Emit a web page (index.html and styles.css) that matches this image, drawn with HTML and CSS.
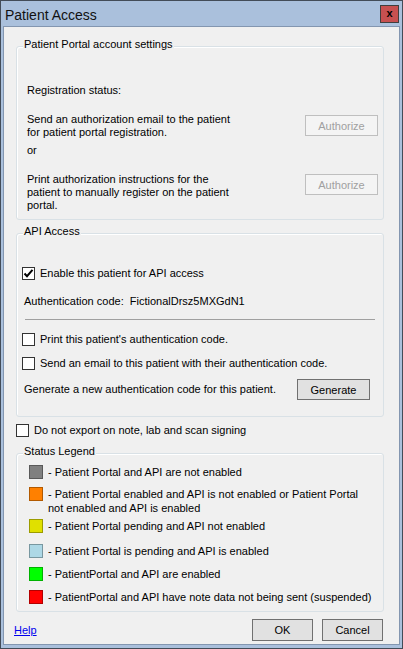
FILE: index.html
```html
<!DOCTYPE html>
<html lang="en">
<head>
  <meta charset="UTF-8">
  <meta name="viewport" content="width=device-width, initial-scale=1">
  <title>Patient Access</title>
  <link rel="stylesheet" href="styles.css">
</head>
<body>

  <div class="window">
    <div class="titlebar">
      <span class="title">Patient Access</span>
      <span class="close">x</span>
    </div>

    <div class="client">

      <div class="group group-portal">
        <span class="group-title">Patient Portal account settings</span>
        <div class="reg-status">Registration status:</div>

        <div class="auth-row auth-row-first">
          <div class="auth-text">Send an authorization email to the patient<br>for patient portal registration.</div>
          <button class="btn btn-disabled" disabled>Authorize</button>
        </div>

        <div class="or">or</div>

        <div class="auth-row auth-row-second">
          <div class="auth-text">Print authorization instructions for the<br>patient to manually register on the patient<br>portal.</div>
          <button class="btn btn-disabled" disabled>Authorize</button>
        </div>
      </div>

      <div class="group group-api">
        <span class="group-title">API Access</span>

        <label class="check-row check-enable">
          <span class="check checked">
            <svg width="11" height="11" viewBox="0 0 11 11"><path d="M1.5 5.5 L4 8.2 L9.5 1.8" fill="none" stroke="#000" stroke-width="2"/></svg>
          </span>
          <span>Enable this patient for API access</span>
        </label>

        <div class="auth-code">Authentication code:&nbsp; FictionalDrsz5MXGdN1</div>

        <div class="separator"></div>

        <label class="check-row check-print">
          <span class="check"></span>
          <span>Print this patient's authentication code.</span>
        </label>

        <label class="check-row check-email">
          <span class="check"></span>
          <span>Send an email to this patient with their authentication code.</span>
        </label>

        <div class="generate-row">
          <span class="generate-text">Generate a new authentication code for this patient.</span>
          <button class="btn btn-generate">Generate</button>
        </div>
      </div>

      <label class="check-row check-export">
        <span class="check"></span>
        <span>Do not export on note, lab and scan signing</span>
      </label>

      <div class="group group-legend">
        <span class="group-title">Status Legend</span>

        <div class="legend-row legend-1">
          <span class="swatch swatch-grey"></span>
          <span>- Patient Portal and API are not enabled</span>
        </div>
        <div class="legend-row legend-2 legend-tall">
          <span class="swatch swatch-orange"></span>
          <span>- Patient Portal enabled and API is not enabled or Patient Portal<br>not enabled and API is enabled</span>
        </div>
        <div class="legend-row legend-3">
          <span class="swatch swatch-yellow"></span>
          <span>- Patient Portal pending and API not enabled</span>
        </div>
        <div class="legend-row legend-4">
          <span class="swatch swatch-blue"></span>
          <span>- Patient Portal is pending and API is enabled</span>
        </div>
        <div class="legend-row legend-5">
          <span class="swatch swatch-green"></span>
          <span>- PatientPortal and API are enabled</span>
        </div>
        <div class="legend-row legend-6">
          <span class="swatch swatch-red"></span>
          <span>- PatientPortal and API have note data not being sent (suspended)</span>
        </div>
      </div>

      <div class="footer">
        <a href="#" class="help">Help</a>
        <div class="footer-buttons">
          <button class="btn btn-ok">OK</button>
          <button class="btn btn-cancel">Cancel</button>
        </div>
      </div>

    </div>
  </div>

</body>
</html>
```

FILE: styles.css
```css
* {
  box-sizing: border-box;
}

body {
  margin: 0;
  padding: 0;
  font-family: 'Liberation Sans', Arial, sans-serif;
  font-size: 11px;
  line-height: 13px;
  color: #000;
  background-color: #f0f0f0;
}

.window {
  width: 403px;
  height: 649px;
  border: 1px solid #434c58;
  background-color: #aac0dc;
  padding: 0 2px 3px 2px;
  display: flex;
  flex-direction: column;
}

.titlebar {
  height: 25px;
  display: flex;
  justify-content: space-between;
  align-items: flex-start;
}

.title {
  font-size: 14px;
  line-height: 18px;
  margin-top: 5px;
  margin-left: 2px;
  color: #111;
}

.close {
  width: 19px;
  height: 18px;
  margin-top: 4px;
  margin-right: 1px;
  background-color: #c75050;
  border: 1px solid #3f3f3f;
  font-weight: bold;
  font-size: 11px;
  line-height: 14px;
  text-align: center;
  color: #000;
}

.client {
  flex: 1;
  background-color: #f0f0f0;
  border: 1px solid #8396b0;
  padding: 19px 15px 0 12px;
  display: flex;
  flex-direction: column;
}

/* group boxes */
.group {
  position: relative;
  border: 1px solid #d9e1e6;
  border-radius: 3px;
  box-shadow: inset 1px 1px 0 #fff;
}

.group-title {
  position: absolute;
  top: -9px;
  left: 6px;
  padding: 0 1px;
  background-color: #f0f0f0;
}

.group-portal {
  height: 174px;
  padding: 37px 5px 0 10px;
}

.auth-row {
  display: flex;
  justify-content: space-between;
  align-items: flex-start;
  margin-top: 16px;
}

.auth-row-first .btn {
  margin-top: 2px;
}

.auth-row-second .btn {
  margin-top: 1px;
}

.or {
  margin-top: 5px;
}

.btn {
  width: 73px;
  height: 21px;
  font-family: 'Liberation Sans', Arial, sans-serif;
  font-size: 11px;
  color: #000;
  background-color: #e1e1e1;
  border: 1px solid #707070;
  padding: 0;
}

.btn-disabled {
  color: #a0a0a0;
  background-color: #f4f4f4;
  border-color: #bfbfbf;
}

.group-api {
  height: 184px;
  margin-top: 13px;
  padding: 33px 5px 0 5px;
}

.check-row {
  display: flex;
  align-items: center;
  gap: 5px;
  height: 13px;
}

.check {
  width: 13px;
  height: 13px;
  border: 1px solid #333;
  background-color: #fff;
  display: flex;
  align-items: center;
  justify-content: center;
}

.auth-code {
  margin-top: 15px;
  margin-left: 2px;
}

.separator {
  margin-top: 11px;
  margin-left: 3px;
  width: 350px;
  border-top: 1px solid #a0a0a0;
}

.check-print {
  margin-top: 13px;
}

.check-email {
  margin-top: 11px;
}

.generate-row {
  display: flex;
  justify-content: space-between;
  align-items: center;
  margin-top: 9px;
  padding-left: 2px;
  padding-right: 8px;
}

.btn-generate {
  height: 21px;
}

.check-export {
  margin-top: 7px;
}

.group-legend {
  height: 159px;
  margin-top: 16px;
  padding: 11px 5px 0 12px;
}

.legend-row {
  display: flex;
  align-items: center;
  gap: 5px;
}

.legend-tall {
  align-items: flex-start;
  line-height: 14px;
}

.legend-2 { margin-top: 8px; }
.legend-3 { margin-top: 4px; }
.legend-4 { margin-top: 11px; }
.legend-5 { margin-top: 9px; }
.legend-6 { margin-top: 9px; }

.swatch {
  width: 14px;
  height: 14px;
  flex-shrink: 0;
  border: 1px solid rgba(0, 0, 0, 0.3);
}

.swatch-grey { background-color: #808080; }
.swatch-orange { background-color: #ff8000; }
.swatch-yellow { background-color: #e0e000; }
.swatch-blue { background-color: #add8e6; }
.swatch-green { background-color: #00ff00; }
.swatch-red { background-color: #ff0000; }

.footer {
  display: flex;
  justify-content: space-between;
  align-items: center;
  margin-top: 7px;
  margin-left: -2px;
  margin-right: 1px;
}

.help {
  color: #0000ee;
  text-decoration: underline;
}

.footer-buttons {
  display: flex;
  gap: 9px;
}

.btn-ok,
.btn-cancel {
  width: 61px;
  height: 22px;
}
```
